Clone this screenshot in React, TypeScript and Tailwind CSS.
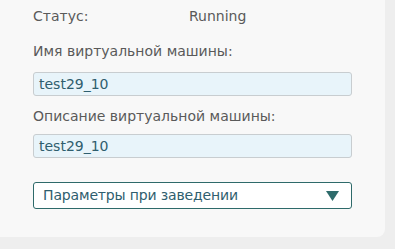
import React from "react";

export default function App() {
  return (
    <div className="w-[395px] h-[249px] bg-[#eeeeee] overflow-hidden" style={{ fontFamily: '"DejaVu Sans", Verdana, sans-serif' }}>
      <div className="w-[385px] h-[237px] bg-[#f8f8f8] rounded-br-[8px] pl-[33px] pt-[6px] text-[14px] text-[#5a5a5a]">
        <div className="flex h-[20px] items-center">
          <span className="w-[156px]">Статус:</span>
          <span>Running</span>
        </div>
        <div className="mt-[16px] h-[18px] leading-[18px]">Имя виртуальной машины:</div>
        <div className="mt-[12px] w-[319px] h-[24px] rounded-[3px] border border-[#c8cdd0] bg-[#e8f4fa] px-[5px] text-[#2f5e6e] leading-[22px]">test29_10</div>
        <div className="mt-[11px] h-[18px] leading-[18px]">Описание виртуальной машины:</div>
        <div className="mt-[9px] w-[319px] h-[24px] rounded-[3px] border border-[#c8cdd0] bg-[#e8f4fa] px-[5px] text-[#2f5e6e] leading-[22px]">test29_10</div>
        <div className="mt-[24px] w-[319px] h-[27px] rounded-[3px] border border-[#2e6a6a] bg-white pl-[9px] pr-[12px] flex items-center justify-between text-[#2f5e6e]">
          <span className="tracking-[-0.15px]">Параметры при заведении</span>
          <svg width="13" height="10" viewBox="0 0 13 10"><polygon points="0,0 13,0 6.5,10" fill="#2e6b6b" /></svg>
        </div>
      </div>
    </div>
  );
}
